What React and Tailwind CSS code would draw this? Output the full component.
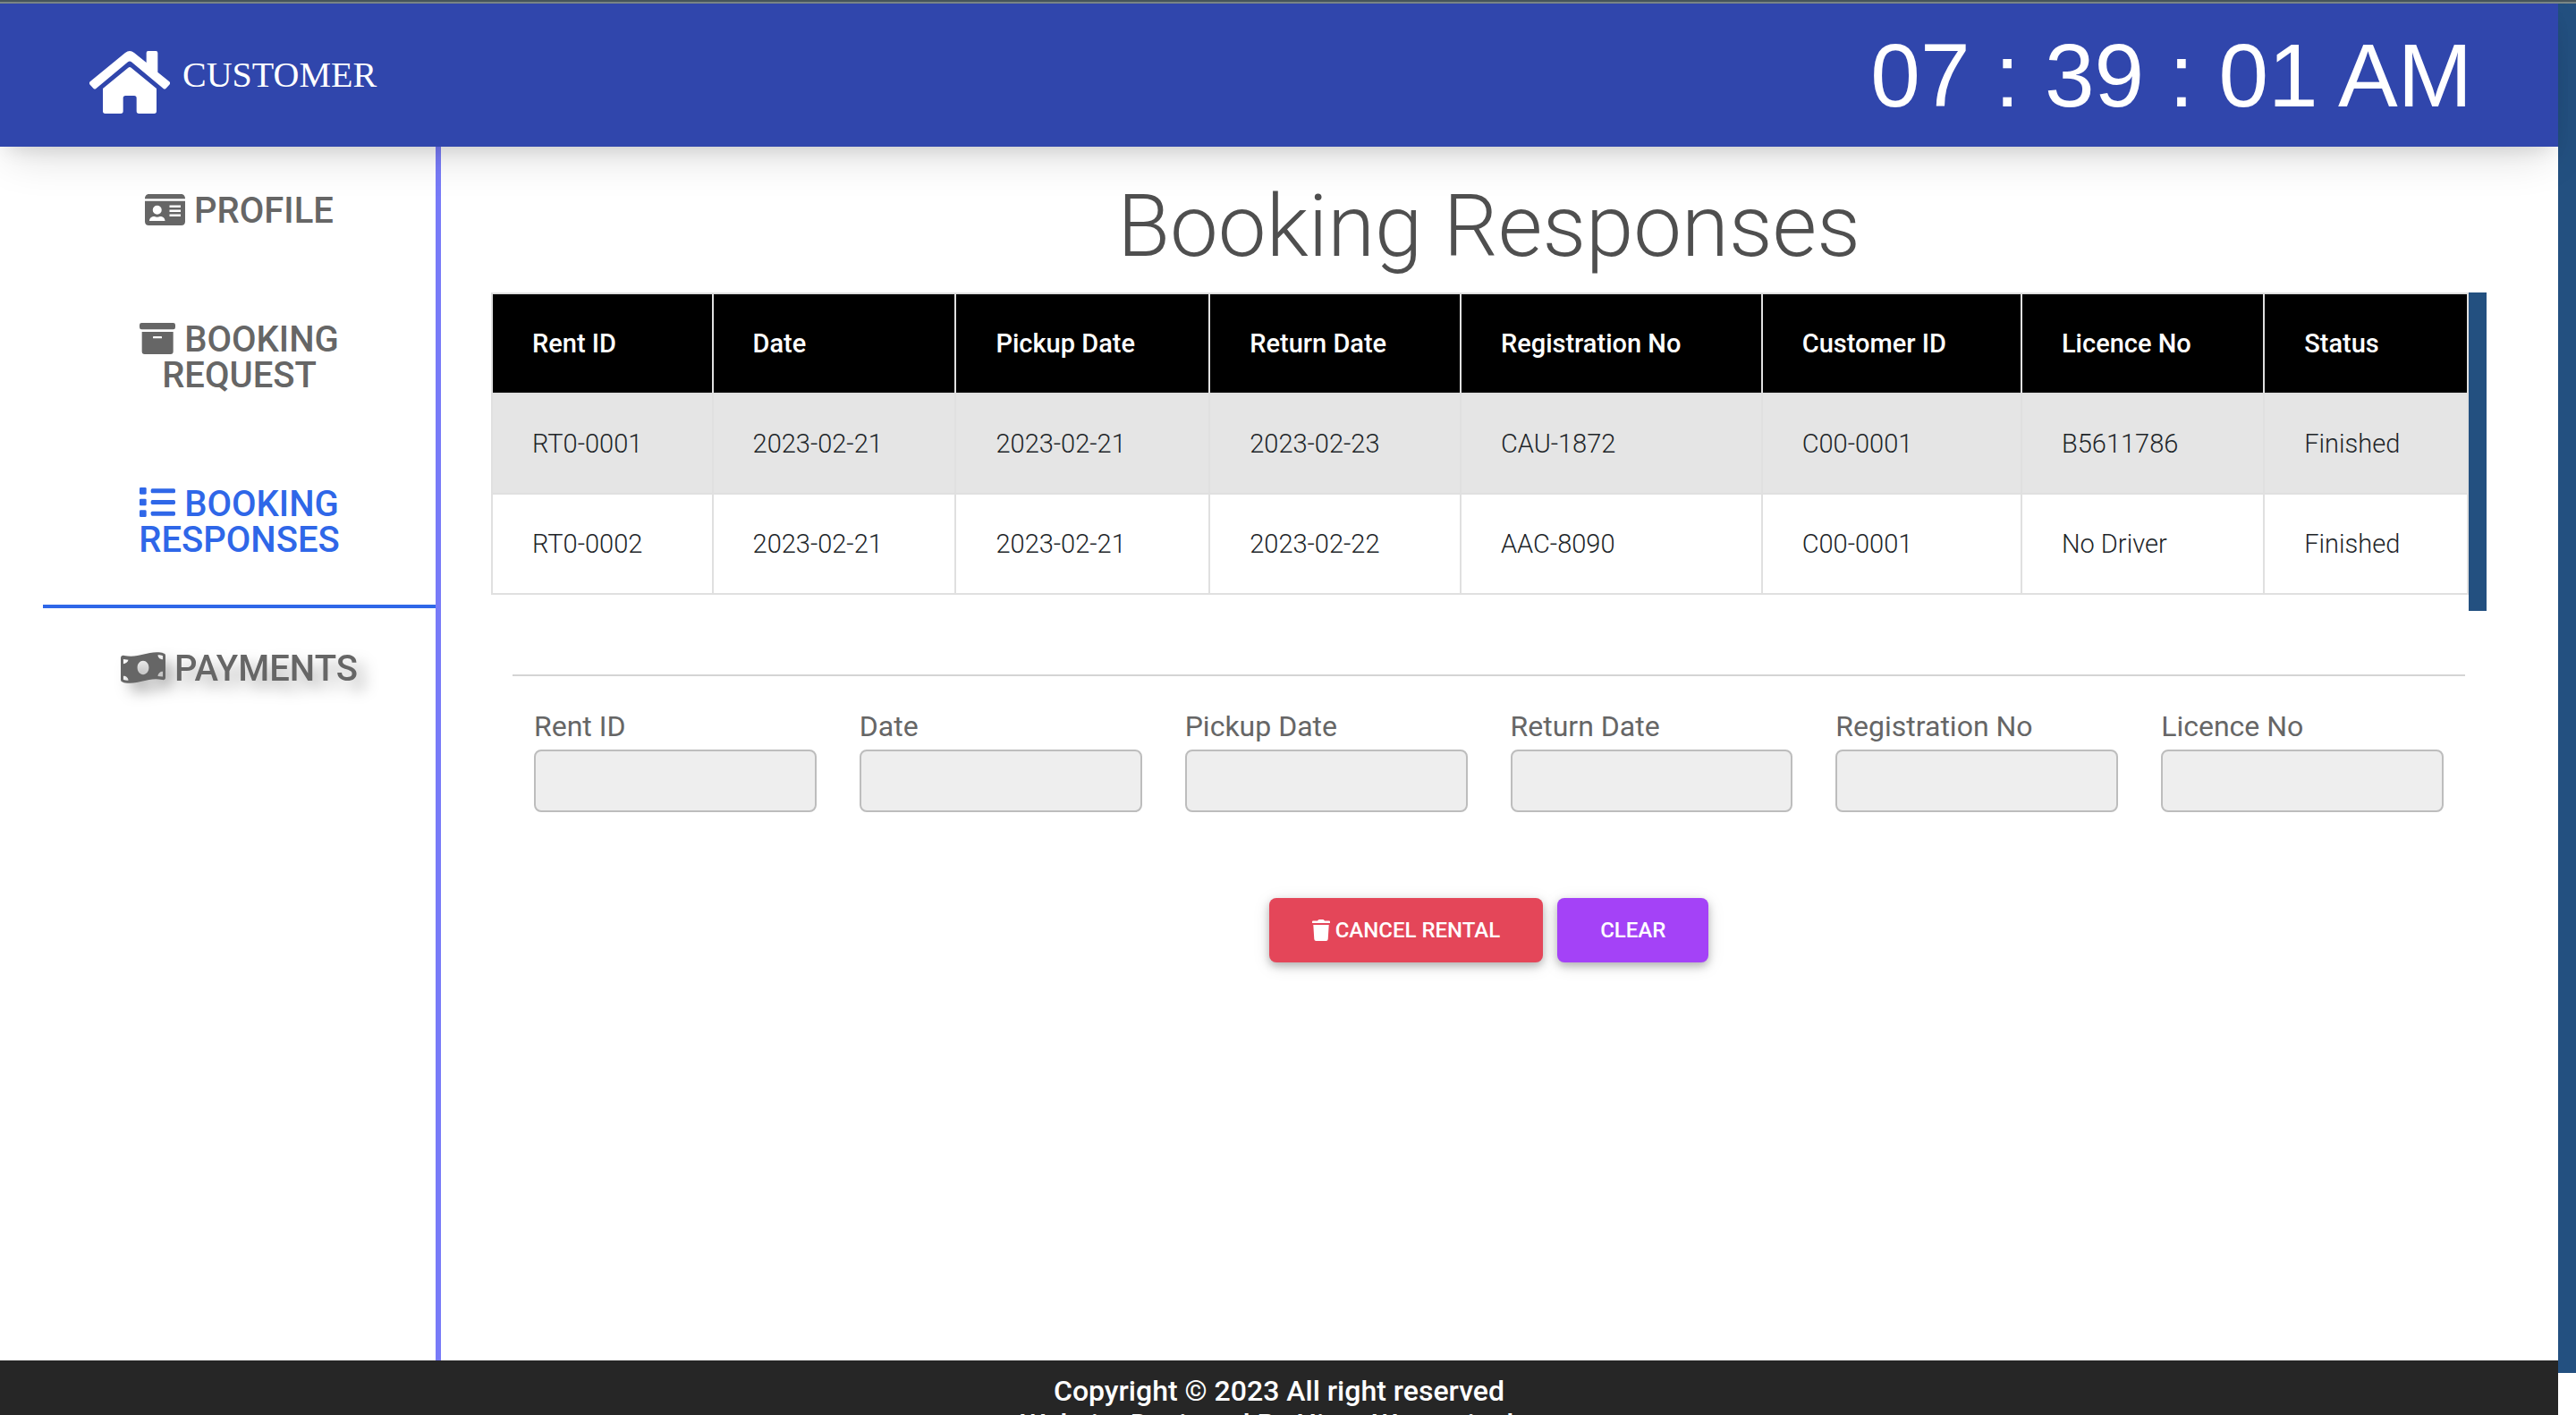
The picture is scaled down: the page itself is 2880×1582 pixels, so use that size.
const nav = [
  { label: "PROFILE", icon: "id" },
  { label: "BOOKING REQUEST", icon: "box" },
  { label: "BOOKING RESPONSES", icon: "list", active: true },
  { label: "PAYMENTS", icon: "money", hovered: true },
];

const columns = [
  "Rent ID",
  "Date",
  "Pickup Date",
  "Return Date",
  "Registration No",
  "Customer ID",
  "Licence No",
  "Status",
];

const rows = [
  ["RT0-0001", "2023-02-21", "2023-02-21", "2023-02-23", "CAU-1872", "C00-0001", "B5611786", "Finished"],
  ["RT0-0002", "2023-02-21", "2023-02-21", "2023-02-22", "AAC-8090", "C00-0001", "No Driver", "Finished"],
];

const fields = ["Rent ID", "Date", "Pickup Date", "Return Date", "Registration No", "Licence No"];

function HouseIcon() {
  return (
    <svg viewBox="0 0 270 210" className="mt-4 h-[70px] w-[90px]" fill="currentColor" aria-hidden="true">
      <path d="M2 103L120 6Q135 -6 150 6L191 39V6Q191 0 197 0H223Q229 0 229 6V71L268 103Q273 108 268 113L257 125Q252 130 247 125L141 37Q135 32 129 37L23 125Q18 130 13 125L2 113Q-3 108 2 103Z" />
      <path d="M130 56Q135 52 140 56L225 126V202Q225 210 217 210H166Q158 210 158 202V158Q158 150 150 150H121Q113 150 113 158V202Q113 210 105 210H53Q45 210 45 202V126Z" />
    </svg>
  );
}

function IdIcon() {
  return (
    <svg viewBox="0 0 576 448" className="inline-block h-[35px] w-[45px] align-[-3px]" fill="currentColor" aria-hidden="true">
      <path
        fillRule="evenodd"
        d="M0 64C0 29 22 0 56 0H520C554 0 576 29 576 64V68H0ZM0 98H576V392C576 428 554 448 520 448H56C22 448 0 428 0 392ZM176 164a64 64 0 1 0 0 128a64 64 0 1 0 0-128ZM64 384C64 344 96 320 136 320C164 332 188 332 216 320C256 320 288 344 288 384ZM352 160H512V192H352ZM352 224H512V256H352ZM352 288H512V320H352Z"
      />
    </svg>
  );
}

function MoneyIcon() {
  return (
    <svg viewBox="0 0 576 400" className="inline-block h-[35px] w-[50px] align-[-3px]" fill="currentColor" aria-hidden="true">
      <path
        fillRule="evenodd"
        d="M0 76C0 50 20 38 44 44C220 82 330-10 490 2C520 4 550 12 568 22C574 27 576 36 576 46V326C576 350 560 362 534 356C356 320 250 412 84 398C52 396 26 388 10 378C3 373 0 364 0 354ZM34 92V150C64 150 92 128 98 100ZM34 306V352C52 360 72 364 98 364C98 330 70 306 34 306ZM542 94V46C526 40 506 36 478 36C478 66 504 94 542 94ZM542 250C508 250 482 274 478 310L542 316ZM288 112C248 112 214 150 214 200C214 250 248 288 288 288C328 288 362 250 362 200C362 150 328 112 288 112Z"
      />
    </svg>
  );
}

function TrashIcon() {
  return (
    <svg viewBox="0 0 20 24" className="inline-block h-6 w-5" fill="currentColor" aria-hidden="true">
      <path d="M0 2.4Q0 1.4 1 1.4H6L6.9.4Q7.2 0 7.8 0H12.2Q12.8 0 13.1.4L14 1.4H19Q20 1.4 20 2.4V4H0ZM1.3 6H18.7L17.7 22Q17.5 24 15.6 24H4.4Q2.5 24 2.3 22Z" />
    </svg>
  );
}

function BoxIcon() {
  return (
    <svg viewBox="0 0 120 105" className="inline-block h-[35px] w-10 align-[-3px]" fill="currentColor" aria-hidden="true">
      <path
        fillRule="evenodd"
        d="M7 0H113Q120 0 120 7V15Q120 22 113 22H7Q0 22 0 15V7Q0 0 7 0ZM8 30H113V96Q113 105 104 105H17Q8 105 8 96ZM47 45Q45 45 45 47V50Q45 52 47 52H73Q75 52 75 50V47Q75 45 73 45Z"
      />
    </svg>
  );
}

function ListIcon() {
  return (
    <svg viewBox="0 0 120 99" className="inline-block h-[33px] w-10 align-[-1px]" fill="currentColor" aria-hidden="true">
      {[0, 38, 76].map((y) => (
        <g key={y}>
          <rect x="0" y={y} width="23" height="23" rx="4" />
          <rect x="38" y={y + 4} width="82" height="15" rx="5" />
        </g>
      ))}
    </svg>
  );
}

function NavIcon({ name }) {
  if (name === "id") return <IdIcon />;
  if (name === "box") return <BoxIcon />;
  if (name === "list") return <ListIcon />;
  return <MoneyIcon />;
}

export default function App() {
  return (
    <div className="h-screen overflow-hidden bg-white font-['Roboto',sans-serif] text-[#4f4f4f]">
      <div className="h-1 border-b-2 border-[#7b8786] bg-[#47555c]" />
      <div className="flex h-full items-start">
        <div className="min-w-0 flex-1">
          <header className="relative z-10 flex h-40 items-center justify-between bg-[#3046ac] pr-24 pl-25 text-white shadow-[0_20px_50px_-10px_rgba(0,0,0,0.14),0_10px_20px_-8px_rgba(0,0,0,0.12)]">
            <a href="#home" className="flex items-center gap-3.5">
              <HouseIcon />
              <span className="font-['Liberation_Serif',serif] text-[40px] leading-12">CUSTOMER</span>
            </a>
            <time className="font-['Liberation_Sans',sans-serif] text-[100px] leading-none whitespace-pre">
              {"07 : 39 : 01 AM"}
            </time>
          </header>

          <div className="flex h-[1357px]">
            <nav className="w-[493px] shrink-0 border-r-6 border-[#787bf8] pt-1 pl-12">
              {nav.map((item) => (
                <a
                  key={item.label}
                  href={"#" + item.label.toLowerCase().replace(" ", "-")}
                  className={
                    "block border-b-4 px-15 pt-12 pb-13 text-center text-[40px] leading-10 font-medium " +
                    (item.active ? "border-[#2f67e8] text-[#2f67e8]" : "border-transparent text-[#666]") +
                    (item.hovered ? " [filter:drop-shadow(10px_10px_8px_rgba(0,0,0,0.3))]" : "")
                  }
                >
                  <NavIcon name={item.icon} /> {item.label}
                </a>
              ))}
            </nav>

            <main className="flex min-w-0 flex-1 flex-col pr-20 pl-14">
              <h1 className="mt-8 text-center text-[96px] leading-[115px] font-light">Booking Responses</h1>

              <div className="mt-4 flex">
                <div className="min-w-0 flex-1 pb-[18px]">
                  <table className="w-full border-collapse border-2 border-[#e0e0e0] text-left text-[29px] leading-[46px]">
                    <thead className="bg-black text-white">
                      <tr>
                        {columns.map((c) => (
                          <th key={c} scope="col" className="border-2 border-[#e0e0e0] px-11 py-8 font-medium whitespace-nowrap">
                            {c}
                          </th>
                        ))}
                      </tr>
                    </thead>
                    <tbody className="font-light text-[#212529]">
                      {rows.map((r) => (
                        <tr key={r[0]} className="odd:bg-[#e5e5e5]">
                          {r.map((v, i) => (
                            <td key={i} className="border-2 border-[#e0e0e0] px-11 py-8 whitespace-nowrap">
                              {v}
                            </td>
                          ))}
                        </tr>
                      ))}
                    </tbody>
                  </table>
                </div>
                <div className="w-5 shrink-0 bg-[#235080]" />
              </div>

              <form className="mt-[71px] mr-6 ml-6 border-t-2 border-[#d4d4d4] px-6 pt-9">
                <div className="grid grid-cols-6 gap-12">
                  {fields.map((f) => (
                    <label key={f} className="flex flex-col gap-1.5 text-[32px] leading-10 text-[#666]">
                      {f}
                      <input disabled className="h-[70px] w-full rounded-lg border-2 border-[#bdbdbd] bg-[#eee] px-6" />
                    </label>
                  ))}
                </div>
                <div className="mt-24 flex justify-center gap-4 text-2xl leading-9 font-medium text-white">
                  <button type="button" className="flex items-center gap-1.5 rounded-lg bg-[#e44659] px-12 py-[18px] shadow-[0_4px_20px_rgba(0,0,0,0.1),0_4px_10px_rgba(0,0,0,0.25)]">
                    <TrashIcon />
                    CANCEL RENTAL
                  </button>
                  <button type="reset" className="rounded-lg bg-[#a442f7] px-12 py-[18px] shadow-[0_4px_20px_rgba(0,0,0,0.1),0_4px_10px_rgba(0,0,0,0.25)]">
                    CLEAR
                  </button>
                </div>
              </form>
            </main>
          </div>

          <footer className="bg-[#262626] pt-4 pb-10 text-center text-[32px] leading-[37px] font-medium text-white">
            <p>Copyright © 2023 All right reserved</p>
            <p>Website Designed By Hiran Weerasinghe</p>
          </footer>
        </div>
        <div className="h-[1531px] w-5 shrink-0 bg-[#235080]" />
      </div>
    </div>
  );
}
